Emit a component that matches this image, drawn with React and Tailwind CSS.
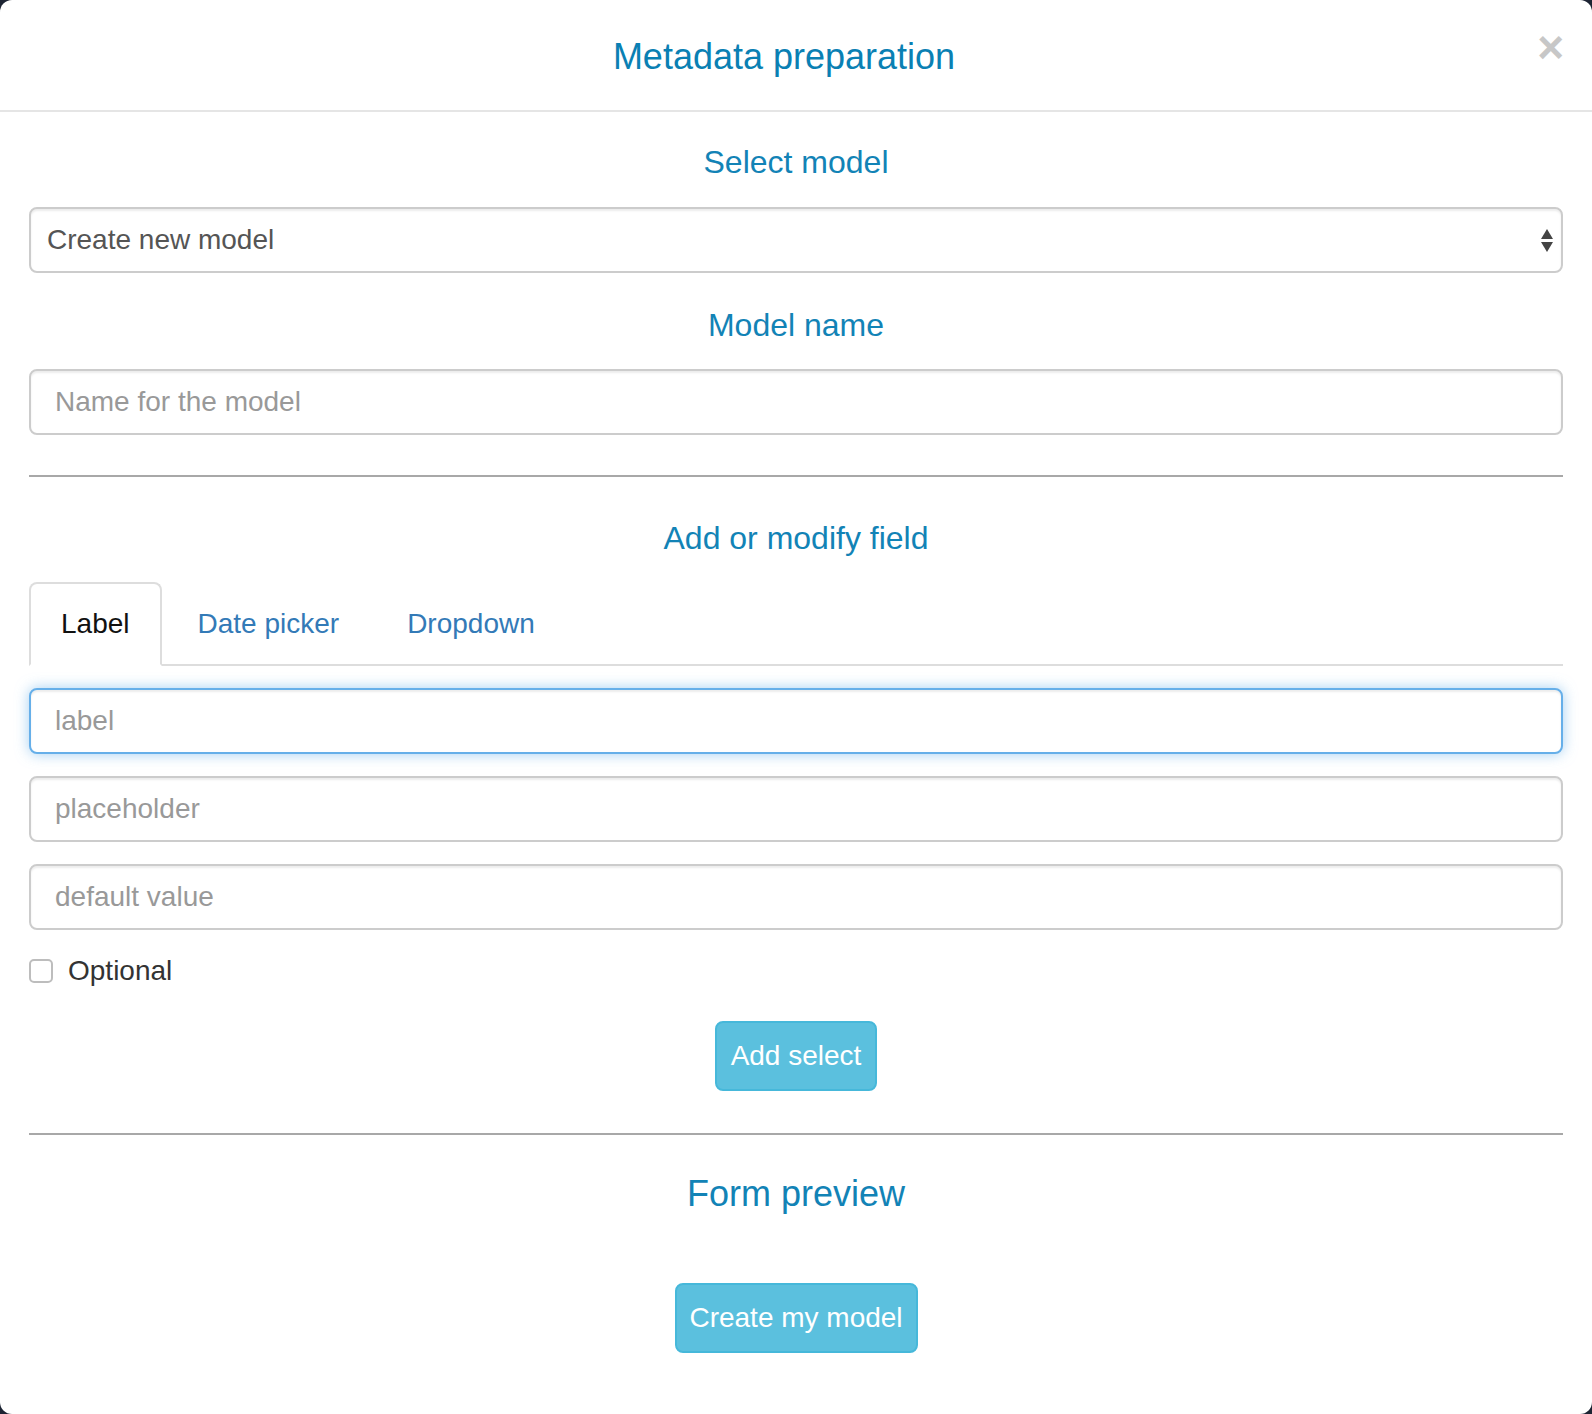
import { useState } from 'react'

const tabs = ['Label', 'Date picker', 'Dropdown']

function Heading({ children, big }) {
  return (
    <h4
      className={
        'flex h-[40px] items-center justify-center text-[#1283b6] ' +
        (big ? 'text-[36px]' : 'text-[32px]')
      }
    >
      {children}
    </h4>
  )
}

function TextInput({ placeholder, focused, className = '' }) {
  return (
    <input
      type="text"
      placeholder={placeholder}
      className={
        'block h-[66px] w-full rounded-[8px] border-2 bg-white px-[24px] text-[28px] text-[#555] outline-none placeholder:text-[#999] ' +
        (focused
          ? 'border-[#66afe9] shadow-[inset_0_2px_2px_rgba(0,0,0,0.075),0_0_14px_rgba(102,175,233,0.6)] '
          : 'border-[#ccc] shadow-[inset_0_2px_2px_rgba(0,0,0,0.075)] ') +
        className
      }
    />
  )
}

export default function App() {
  const [active, setActive] = useState('Label')
  const [optional, setOptional] = useState(false)

  return (
    <div className="min-h-[1414px] bg-[#1d2433] font-['Liberation_Sans',Arial,sans-serif]">
      <div className="h-[1414px] overflow-hidden rounded-[12px] bg-white">
        {/* header */}
        <div className="relative flex h-[112px] items-center justify-center border-b-2 border-[#e5e5e5] pr-[24px] pt-[4px]">
          <h3 className="text-[36px] text-[#0a80b3]">Metadata preparation</h3>
          <button
            type="button"
            className="absolute right-[28px] top-[24px] text-[46px] font-bold leading-none text-[#c7c7c7]"
          >
            ×
          </button>
        </div>

        <div className="px-[29px]">
          <div className="mt-[30px]">
            <Heading>Select model</Heading>
          </div>
          <div className="mt-[25px] flex h-[66px] items-center justify-between rounded-[8px] border-2 border-[#ccc] bg-white pl-[16px] pr-[7px] text-[28px] text-[#555] shadow-[inset_0_2px_2px_rgba(0,0,0,0.075)]">
            <span>Create new model</span>
            <svg width="14" height="28" viewBox="0 0 14 28">
              <path d="M7 3 L13 13 L1 13 Z" fill="#444" />
              <path d="M1 16 L13 16 L7 26 Z" fill="#444" />
            </svg>
          </div>

          <div className="mt-[32px]">
            <Heading>Model name</Heading>
          </div>
          <div className="mt-[24px]">
            <TextInput placeholder="Name for the model" />
          </div>

          <div className="mt-[40px] border-t-2 border-[#a8a8a8]" />

          <div className="mt-[41px]">
            <Heading>Add or modify field</Heading>
          </div>

          {/* tabs */}
          <ul className="mt-[24px] flex border-b-2 border-[#ddd]">
            {tabs.map((t) => (
              <li key={t} className="-mb-[2px] mr-[4px]">
                <button
                  type="button"
                  onClick={() => setActive(t)}
                  className={
                    'rounded-t-[8px] border-2 px-[30px] py-[20px] text-[28px] leading-[40px] ' +
                    (active === t
                      ? 'border-[#ddd] border-b-white bg-white text-[#111]'
                      : 'border-transparent text-[#337ab7]')
                  }
                >
                  {t}
                </button>
              </li>
            ))}
          </ul>

          <div className="mt-[22px] flex flex-col gap-[22px]">
            <TextInput placeholder="label" focused />
            <TextInput placeholder="placeholder" />
            <TextInput placeholder="default value" />
          </div>

          <label className="mt-[20px] flex items-center gap-[15px] text-[28px] text-[#333]">
            <span
              onClick={() => setOptional(!optional)}
              className="block h-[24px] w-[24px] rounded-[5px] border-2 border-[#bdbdbd] bg-white"
            />
            Optional
          </label>

          <div className="mt-[29px] flex justify-center">
            <button
              type="button"
              className="h-[70px] w-[162px] rounded-[8px] border-2 border-[#46b8da] bg-[#5bc0de] text-[28px] text-white"
            >
              Add select
            </button>
          </div>

          <div className="mt-[42px] border-t-2 border-[#a8a8a8]" />

          <div className="mt-[39px]">
            <Heading big>Form preview</Heading>
          </div>

          <div className="mt-[69px] flex justify-center">
            <button
              type="button"
              className="h-[70px] w-[243px] rounded-[8px] border-2 border-[#46b8da] bg-[#5bc0de] text-[28px] text-white"
            >
              Create my model
            </button>
          </div>
        </div>
      </div>
    </div>
  )
}
